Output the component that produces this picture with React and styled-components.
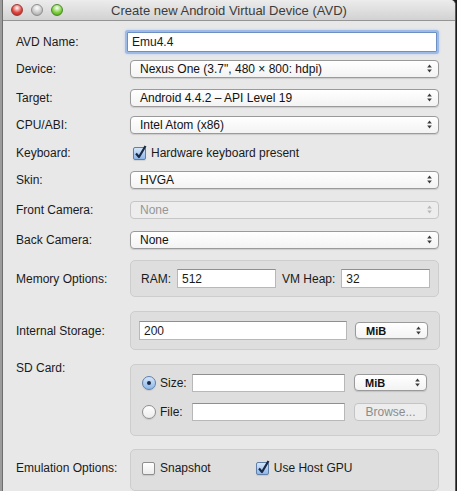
import React from 'react';
import styled, { createGlobalStyle, css } from 'styled-components';

const GlobalStyle = createGlobalStyle`
  html, body {
    margin: 0;
    padding: 0;
    background: #1c1c1c;
  }
  body {
    font-family: "Liberation Sans", Arial, sans-serif;
    font-size: 12px;
    color: #1a1a1a;
  }
`;

const Page = styled.div`
  display: flex;
  width: 457px;
  height: 491px;
  overflow: hidden;
`;

const DesktopStrip = styled.div`
  width: 2px;
  background: #9c9c9c;
  border-right: 1px solid #6e6e6e;
`;

const Window = styled.div`
  width: 452px;
  background: #e8e8e8;
  border-top-right-radius: 5px;
  border-right: 1px solid #5a5a5a;
  display: flex;
  flex-direction: column;
`;

const TitleBar = styled.div`
  height: 24px;
  display: flex;
  align-items: center;
  position: relative;
  background: linear-gradient(#ececec, #d2d2d2);
  border-bottom: 1px solid #959595;
  border-top-right-radius: 5px;
`;

const Lights = styled.div`
  display: flex;
  gap: 8px;
  padding-left: 8px;
`;

const Light = styled.span`
  width: 12px;
  height: 12px;
  border-radius: 50%;
  box-sizing: border-box;
  border: 1px solid ${(p) => p.$edge};
  background: radial-gradient(circle at 50% 30%, #ffffff 0%, ${(p) => p.$color} 55%, ${(p) => p.$dark} 100%);
`;

const Title = styled.div`
  position: absolute;
  left: 0;
  right: 0;
  text-align: center;
  font-size: 13px;
  color: #3c3c3c;
  pointer-events: none;
`;

const Form = styled.div`
  display: flex;
  flex-direction: column;
  padding: 0 16px 0 13px;
`;

const Row = styled.div`
  display: flex;
  align-items: ${(p) => (p.$top ? 'flex-start' : 'center')};
  height: ${(p) => p.$h}px;
  margin-top: ${(p) => p.$mt || 0}px;
`;

const Label = styled.div`
  width: 114px;
  flex: none;
  ${(p) => p.$top && css`margin-top: -3px;`}
`;

const Field = styled.div`
  flex: 1;
  display: flex;
  align-items: center;
`;

const TextInput = styled.div`
  box-sizing: border-box;
  height: ${(p) => p.$h || 18}px;
  width: ${(p) => (p.$w ? `${p.$w}px` : 'auto')};
  flex: ${(p) => (p.$w ? 'none' : 1)};
  background: #fff;
  border: 1px solid #b8b8b8;
  border-top-color: #8f8f8f;
  padding: 0 4px;
  display: flex;
  align-items: center;
  font-size: 12px;
  ${(p) =>
    p.$focus &&
    css`
      border-color: #6c8fc4;
      box-shadow: 0 0 0 2px #9dbbe6, 0 0 3px 2px #b8cfee;
      border-radius: 1px;
      margin: 0 2px 0 -3px;
    `}
`;

const SelectBox = styled.div`
  box-sizing: border-box;
  height: ${(p) => p.$h || 18}px;
  width: ${(p) => (p.$w ? `${p.$w}px` : 'auto')};
  flex: ${(p) => (p.$w ? 'none' : 1)};
  display: flex;
  align-items: center;
  justify-content: space-between;
  padding: 0 6px 0 9px;
  border-radius: 4px;
  border: 1px solid #9a9a9a;
  background: linear-gradient(#ffffff, #f3f3f3);
  box-shadow: 0 1px 1px rgba(0, 0, 0, 0.12);
  font-size: 12px;
  color: #111;
  ${(p) =>
    p.$disabled &&
    css`
      border-color: #c6c6c6;
      background: #ededed;
      color: #969696;
      box-shadow: none;
    `}
  ${(p) =>
    p.$small &&
    css`
      font-size: 11px;
      font-weight: bold;
      padding-left: 10px;
    `}
`;

const Arrows = ({ faded }) => (
  <svg width="5" height="9" viewBox="0 0 5 9">
    <path d="M2.5 0.5 L4.8 3.5 L0.2 3.5 Z" fill={faded ? '#b8b8b8' : '#3a3a3a'} />
    <path d="M2.5 8.5 L4.8 5.5 L0.2 5.5 Z" fill={faded ? '#b8b8b8' : '#3a3a3a'} />
  </svg>
);

const Select = ({ children, disabled, ...rest }) => (
  <SelectBox $disabled={disabled} {...rest}>
    <span>{children}</span>
    <Arrows faded={disabled} />
  </SelectBox>
);

const CheckWrap = styled.label`
  display: flex;
  align-items: center;
  gap: 5px;
  margin-left: ${(p) => p.$ml || 0}px;
`;

const CheckBox = styled.span`
  position: relative;
  box-sizing: border-box;
  width: 13px;
  height: 13px;
  border-radius: 2px;
  border: 1px solid ${(p) => (p.$on ? '#5f7ea8' : '#8e8e8e')};
  background: ${(p) => (p.$on ? 'linear-gradient(#d5e6fa, #8db8ea)' : 'linear-gradient(#ffffff, #ececec)')};
  box-shadow: 0 1px 1px rgba(0, 0, 0, 0.1);
`;

const Tick = styled.svg`
  position: absolute;
  left: 0px;
  top: -4px;
`;

const Check = ({ on, children, ml }) => (
  <CheckWrap $ml={ml}>
    <CheckBox $on={on}>
      {on && (
        <Tick width="14" height="16" viewBox="0 0 14 16">
          <path d="M2 9.5 L5 13 L11.5 2" fill="none" stroke="#1b2a44" strokeWidth="2.2" strokeLinejoin="round" />
        </Tick>
      )}
    </CheckBox>
    <span>{children}</span>
  </CheckWrap>
);

const RadioDot = styled.span`
  box-sizing: border-box;
  width: 14px;
  height: 14px;
  border-radius: 50%;
  border: 1px solid ${(p) => (p.$on ? '#5f7ea8' : '#8e8e8e')};
  background: ${(p) => (p.$on ? 'linear-gradient(#d5e6fa, #8db8ea)' : 'linear-gradient(#ffffff, #ececec)')};
  display: flex;
  align-items: center;
  justify-content: center;
  box-shadow: 0 1px 1px rgba(0, 0, 0, 0.1);
  &::after {
    content: '';
    width: 4px;
    height: 4px;
    border-radius: 50%;
    background: ${(p) => (p.$on ? '#1b2a44' : 'transparent')};
  }
`;

const RadioLabel = styled.span`
  width: 32px;
  margin-left: 4px;
`;

const Group = styled.div`
  flex: 1;
  box-sizing: border-box;
  height: ${(p) => p.$h}px;
  background: #dedede;
  border: 1px solid #cdcdcd;
  border-radius: 5px;
  display: flex;
  flex-direction: ${(p) => (p.$column ? 'column' : 'row')};
  align-items: ${(p) => (p.$column ? 'stretch' : 'center')};
  gap: ${(p) => p.$gap || 0}px;
  padding: ${(p) => p.$pad};
`;

const GroupRow = styled.div`
  display: flex;
  align-items: center;
  height: ${(p) => p.$h}px;
`;

const InlineLabel = styled.span`
  margin: 0 ${(p) => p.$mr}px 0 ${(p) => p.$ml}px;
`;

const Button = styled.div`
  box-sizing: border-box;
  width: 73px;
  height: 18px;
  border-radius: 4px;
  border: 1px solid #c4c4c4;
  background: #ededed;
  color: #8c8c8c;
  display: flex;
  align-items: center;
  justify-content: center;
  font-size: 12px;
`;

export default function App() {
  return (
    <>
      <GlobalStyle />
      <Page>
        <DesktopStrip />
        <Window>
          <TitleBar>
            <Lights>
              <Light $color="#e0443e" $dark="#a3201b" $edge="#9a3a37" />
              <Light $color="#c9c9c9" $dark="#9a9a9a" $edge="#8e8e8e" />
              <Light $color="#7dd13d" $dark="#3f8e17" $edge="#4c8a2a" />
            </Lights>
            <Title>Create new Android Virtual Device (AVD)</Title>
          </TitleBar>
          <Form>
            <Row $h={26} $mt={8}>
              <Label>AVD Name:</Label>
              <Field>
                <TextInput $h={20} $focus>Emu4.4</TextInput>
              </Field>
            </Row>
            <Row $h={27}>
              <Label>Device:</Label>
              <Field>
                <Select>Nexus One (3.7", 480 × 800: hdpi)</Select>
              </Field>
            </Row>
            <Row $h={27} $mt={2}>
              <Label>Target:</Label>
              <Field>
                <Select>Android 4.4.2 – API Level 19</Select>
              </Field>
            </Row>
            <Row $h={27}>
              <Label>CPU/ABI:</Label>
              <Field>
                <Select>Intel Atom (x86)</Select>
              </Field>
            </Row>
            <Row $h={24} $mt={3}>
              <Label>Keyboard:</Label>
              <Field>
                <Check on ml={3}>Hardware keyboard present</Check>
              </Field>
            </Row>
            <Row $h={27} $mt={1}>
              <Label>Skin:</Label>
              <Field>
                <Select>HVGA</Select>
              </Field>
            </Row>
            <Row $h={27} $mt={3}>
              <Label>Front Camera:</Label>
              <Field>
                <Select disabled>None</Select>
              </Field>
            </Row>
            <Row $h={27} $mt={3}>
              <Label>Back Camera:</Label>
              <Field>
                <Select>None</Select>
              </Field>
            </Row>
            <Row $h={37} $mt={7}>
              <Label>Memory Options:</Label>
              <Group $h={37} $pad="0 8px 0 10px">
                <InlineLabel $ml={0} $mr={6}>RAM:</InlineLabel>
                <TextInput $w={99} $h={19}>512</TextInput>
                <InlineLabel $ml={6} $mr={6}>VM Heap:</InlineLabel>
                <TextInput $h={19}>32</TextInput>
              </Group>
            </Row>
            <Row $h={39} $mt={14}>
              <Label>Internal Storage:</Label>
              <Group $h={39} $pad="0 11px 0 8px">
                <TextInput $w={208} $h={19}>200</TextInput>
                <Select $w={73} $h={17} $small style={{ marginLeft: 8 }}>MiB</Select>
              </Group>
            </Row>
            <Row $h={72} $mt={14} $top>
              <Label $top>SD Card:</Label>
              <Group $h={72} $column $pad="8px 12px 0 11px" $gap={10}>
                <GroupRow $h={19}>
                  <RadioDot $on />
                  <RadioLabel>Size:</RadioLabel>
                  <TextInput $w={153} $h={18} />
                  <Select $w={73} $h={17} $small style={{ marginLeft: 9 }}>MiB</Select>
                </GroupRow>
                <GroupRow $h={19}>
                  <RadioDot />
                  <RadioLabel>File:</RadioLabel>
                  <TextInput $w={153} $h={18} />
                  <Button style={{ marginLeft: 9 }}>Browse...</Button>
                </GroupRow>
              </Group>
            </Row>
            <Row $h={42} $mt={13} $top>
              <Label style={{ marginTop: 12 }}>Emulation Options:</Label>
              <Group $h={42} $pad="0 0 4px 11px">
                <Check>Snapshot</Check>
                <Check ml={45} on>Use Host GPU</Check>
              </Group>
            </Row>
          </Form>
        </Window>
      </Page>
    </>
  );
}
